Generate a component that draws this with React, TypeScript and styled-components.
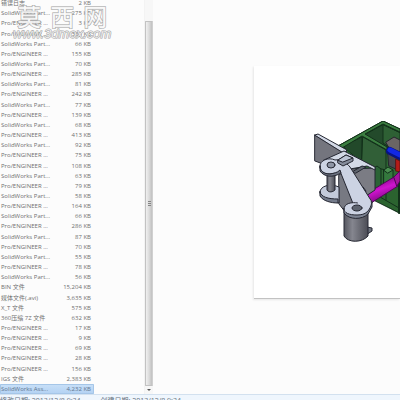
import React from "react";
import styled, { createGlobalStyle, css } from "styled-components";

const GlobalStyle = createGlobalStyle`
  *, *::before, *::after { box-sizing: border-box; }
  body {
    margin: 0;
    background: #fcfcfc;
    color: #707070;
    font-family: "Open Sans", "Noto Sans CJK SC", sans-serif;
    font-size: 6px;
  }
`;

const Window = styled.div`
  position: relative;
  display: flex;
  flex-direction: column;
  height: 100vh;
  overflow: hidden;
`;

const Workspace = styled.main`
  display: flex;
  flex: 1;
  min-height: 0;
`;

const FilePane = styled.section`
  display: flex;
  flex: 0 0 144px;
  min-height: 0;
`;

const FileTable = styled.table`
  display: flex;
  width: 94px;
  margin-top: -2px;
`;

const FileBody = styled.tbody`
  display: grid;
  flex: 1;
  grid-auto-rows: 1fr;
`;

const FileRow = styled.tr<{ $selected?: boolean }>`
  display: flex;
  align-items: center;
  min-height: 0;
  padding: 0 3px 0 1px;
  line-height: 8px;
  white-space: nowrap;
  ${(p) =>
    p.$selected &&
    css`
      background: linear-gradient(#c9e0f8, #b2d1f3);
      box-shadow: inset 0 0 0 1px #a5c6e8;
      border-radius: 1px;
      color: #5f7690;
    `}
`;

const TypeCell = styled.td`
  flex: 1;
  padding: 0;
`;

const SizeCell = styled.td`
  padding: 0;
  text-align: right;
`;

const ScrollTrack = styled.div`
  display: flex;
  flex: 0 0 9px;
  flex-direction: column;
  border-left: 1px solid #f3f3f3;
  background: #f7f7f7;
`;

const ScrollThumb = styled.div`
  display: flex;
  flex: 1;
  align-items: center;
  justify-content: center;
  margin-top: 21px;
  border: 1px solid #c2c2c2;
  border-right-color: #d0d0d0;
  border-radius: 1px;
  background: linear-gradient(90deg, #f0f0f0, #dcdcdc 50%, #c0c0c0);
`;

const ScrollButton = styled.button`
  display: flex;
  align-items: center;
  justify-content: center;
  height: 8px;
  padding: 0;
  border: 0;
  background: #f7f7f7;
`;

const Preview = styled.section`
  display: flex;
  flex: 1;
  min-width: 0;
  padding: 66px 0 95px 101px;
  background: #fcfcfc;
`;

const Sheet = styled.div`
  display: flex;
  flex: 1;
  align-items: flex-start;
  justify-content: flex-end;
  border-bottom: 1px solid #c2c2c2;
  background: #ffffff;
  box-shadow: -1px 1px 2px #e6e6e6;
`;

const Model = styled.svg`
  flex: none;
  width: 100px;
  height: 130px;
  margin-top: 55px;
`;

const StatusBar = styled.footer`
  display: flex;
  gap: 20px;
  height: 6px;
  padding-top: 1px;
  border-top: 1px solid #d3e1ef;
  background: #eff6fd;
  color: #66717d;
  font-size: 7px;
  line-height: 10px;
  white-space: nowrap;
  overflow: hidden;
`;

const Watermark = styled.div`
  position: absolute;
  top: 3px;
  left: 13px;
  display: flex;
  flex-direction: column;
  align-items: center;
  color: rgba(255, 255, 255, 0.8);
  paint-order: stroke fill;
  -webkit-text-stroke: 1px #a0a0a0;
  pointer-events: none;
`;

const WatermarkName = styled.div`
  display: flex;
  gap: 9px;
  font-family: "Noto Sans CJK SC", sans-serif;
  font-size: 24px;
  font-weight: 500;
  line-height: 25px;
`;

const WatermarkSite = styled.div`
  font-family: "Liberation Sans", sans-serif;
  font-size: 13px;
  font-style: italic;
  line-height: 12px;
`;

const SW = "SolidWorks Part...";
const PE = "Pro/ENGINEER ...";

const files: [string, string][] = [
  ["错误日志", "2"],
  [SW, "275"],
  [PE, "3"],
  [PE, "336"],
  [SW, "66"],
  [PE, "155"],
  [SW, "70"],
  [PE, "285"],
  [SW, "81"],
  [PE, "242"],
  [SW, "77"],
  [PE, "139"],
  [SW, "68"],
  [PE, "413"],
  [SW, "92"],
  [PE, "75"],
  [PE, "108"],
  [SW, "63"],
  [PE, "79"],
  [SW, "58"],
  [PE, "164"],
  [SW, "66"],
  [PE, "286"],
  [SW, "87"],
  [PE, "70"],
  [SW, "55"],
  [PE, "78"],
  [SW, "56"],
  ["BIN 文件", "15,204"],
  ["媒体文件(.avi)", "3,635"],
  ["X_T 文件", "575"],
  ["360压缩 7Z 文件", "632"],
  [PE, "17"],
  [PE, "9"],
  [PE, "69"],
  [PE, "28"],
  [PE, "156"],
  ["IGS 文件", "2,383"],
  ["SolidWorks Ass...", "4,232"],
];

function AssemblyModel() {
  return (
    <Model viewBox="0 0 100 130" role="img" aria-label="Assembly preview">
      <defs>
        <linearGradient id="cylinder" x1="0" x2="1">
          <stop offset="0" stopColor="#55565f" />
          <stop offset="0.35" stopColor="#85868f" />
          <stop offset="1" stopColor="#4c4d56" />
        </linearGradient>
        <linearGradient id="rod" x1="0.3" y1="0.2" x2="0.6" y2="0.9">
          <stop offset="0" stopColor="#8c0a8e" />
          <stop offset="0.4" stopColor="#cf14cf" />
          <stop offset="1" stopColor="#7c087e" />
        </linearGradient>
      </defs>
      <g strokeLinejoin="round" strokeLinecap="round">
        <g stroke="#12301a" strokeWidth="1">
          <path d="M38 25 L83 0 L100 8 V92 L66 74 Z" fill="#2f6a35" />
          <path d="M83 4 L100 12 V30 L86 26 L65 14 Z" fill="#234a2b" />
          <path d="M83 4 V22 L92 28 L100 22 V12 Z" fill="#2e6034" />
          <path d="M43 25 L62 16 V41 Z" fill="#22492a" />
          <path d="M63 16 L86 29 V49 L77 47 L62 40 Z" fill="#315f37" />
          <path d="M38 25 L83 0 L100 8 V11 L83 3 L65 13 L87 26 V29 L62 15 L42 27 Z" fill="#3b7d40" />
          <path d="M74 47 L77 45 L81 48 V70 L74 73 Z" fill="#2b6335" />
          <path d="M84 49 L93 49 V58 L84 64 Z" fill="#34783d" />
          <path d="M84 49 L88 46 L93 49 L88 52 Z" fill="#4a8d50" />
          <path d="M72 78 L97 65 L100 66 V92 Z" fill="#2b632f" />
          <path d="M80 76 L99 87 M86 71 V79" fill="none" />
          <path d="M99 62 V92" fill="none" strokeWidth="2" />
        </g>
        <g stroke="#26242d" strokeWidth="1">
          <path d="M86 21 L94 16 L100 19 V35 L91 30 Z" fill="#6a6564" />
          <path d="M88 32 L98 38 V49 L89 45 Z" fill="#48474e" />
          <path d="M96 38 L100 40 V51 L96 50 Z" fill="#b51b18" stroke="#5c1414" />
        </g>
        <path d="M90 30 L100 35" stroke="#071384" strokeWidth="8" />
        <path d="M90 29 L100 34" stroke="#1228e4" strokeWidth="5" />
        <path d="M66 73 L94 56 L98 65 L71 82 Z" fill="url(#rod)" stroke="#510658" />
        <path d="M94 56 L100 50 V60 L97 65 Z" fill="#a5139e" stroke="#510658" />
        <g stroke="#252732" strokeWidth="1">
          <path d="M15 14 L47 31 L23 43 L15 40 Z" fill="#74757e" />
          <path d="M39 54 L45 50 L58 84 L46 92 L39 83 Z" fill="#777982" />
          <path d="M50 48 L75 47 V69 L66 75 Z" fill="#7b7c84" />
          <path d="M15 14 L18 13 L47 29 L44 32 Z" fill="#d3d9e6" />
          <path d="M20 71 C20 65 30 62 39 66 V82 L32 80 C24 79 20 77 20 71Z" fill="#c3cada" />
          <path d="M20 71 V75 C23 80 31 82 38 82 V78 C28 78 21 76 20 71Z" fill="#747b8b" />
          <path d="M27 51 V69 C29 72 33 71 35 69 V51Z" fill="url(#cylinder)" />
          <path d="M24 39 L44 30 L75 46 V49 L67 45 L50 48 L44 42 Z" fill="#d3d9e6" />
          <path d="M52 51 L62 45 L66 46 L56 52 Z" fill="#60656f" />
          <path
            d="M20 46 C19 39 29 36 35 39 C40 38 46 41 50 46 L72 81 C68 86 64 82 58 82 C56 82 55 84 54 85 L40 50 C37 53 34 52 30 53 C24 53 20 51 20 46Z"
            fill="#ccd3e3"
          />
          <path d="M20 45 V50 C24 56 33 57 41 52 L40 49 C37 52 34 52 30 53 C24 53 20 50 20 45Z" fill="#6c7281" />
          <path d="M38 39 L46 34 L53 37 V40 L43 45 L38 42Z" fill="#858c9b" />
          <path d="M38 39 L46 34 L53 37 L43 41Z" fill="#bcc4d4" />
          <path d="M67 106 L72 107 V110 L66 114Z" fill="#707580" />
          <path d="M44 90 V115 C48 122 62 122 68 115 V90Z" fill="url(#cylinder)" />
          <path d="M44 88 V92 C49 99 62 99 68 93 L72 86 V81 C67 94 48 96 44 88Z" fill="#7d8493" />
          <path d="M44 88 C44 82 52 81 58 82 L72 81 C70 90 66 94 57 94 C49 94 44 92 44 88Z" fill="#ccd3e3" />
          <path d="M57 79 L70 79 L71 82 L65 85 L58 83Z" fill="#ccd3e3" stroke="none" />
          <ellipse cx="31" cy="44" rx="4" ry="3" fill="#8e95a5" />
          <ellipse cx="57" cy="87" rx="5" ry="3" fill="#5d636e" />
          <path d="M63 66 L66 70" fill="none" />
        </g>
      </g>
    </Model>
  );
}

export default function App() {
  return (
    <>
      <GlobalStyle />
      <Window>
        <Workspace>
          <FilePane>
            <FileTable aria-label="Files">
              <FileBody>
                {files.map(([type, size], index) => (
                  <FileRow key={index} $selected={index === files.length - 1}>
                    <TypeCell>{type}</TypeCell>
                    <SizeCell>{size} KB</SizeCell>
                  </FileRow>
                ))}
              </FileBody>
            </FileTable>
          </FilePane>
          <ScrollTrack>
            <ScrollThumb>
              <svg width="3" height="5" viewBox="0 0 3 5" aria-hidden="true">
                <path d="M0 .5H3M0 2.5H3M0 4.5H3" stroke="#858585" />
              </svg>
            </ScrollThumb>
            <ScrollButton aria-label="Scroll down">
              <svg width="4" height="2" viewBox="0 0 4 2" aria-hidden="true">
                <path d="M0 0H4L2 2Z" fill="#555555" />
              </svg>
            </ScrollButton>
          </ScrollTrack>
          <Preview>
            <Sheet>
              <AssemblyModel />
            </Sheet>
          </Preview>
        </Workspace>
        <StatusBar>
          <span>修改日期: 2013/12/8 9:34</span>
          <span>创建日期: 2013/12/8 9:34</span>
        </StatusBar>
        <Watermark>
          <WatermarkName>
            <span>莫</span>
            <span>西</span>
            <span>网</span>
          </WatermarkName>
          <WatermarkSite>www.3dmox.com</WatermarkSite>
        </Watermark>
      </Window>
    </>
  );
}
